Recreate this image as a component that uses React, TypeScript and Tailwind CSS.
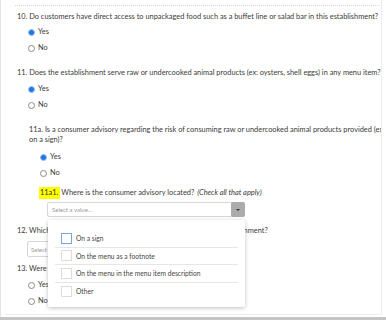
import React from "react";

function Radio({ checked, label }: { checked?: boolean; label: string }) {
  return (
    <div className="flex items-center h-[16px]">
      {checked ? (
        <span className="w-[7px] h-[7px] rounded-full bg-[#1e78e6] border border-[#9cc3f2]" />
      ) : (
        <span className="w-[7px] h-[7px] rounded-full bg-white border border-[#8a8a8a]" />
      )}
      <span className="ml-[3px]">{label}</span>
    </div>
  );
}

function Check({ label, first, last }: { label: string; first?: boolean; last?: boolean }) {
  return (
    <div className={`flex items-center h-[17.5px] mx-[7px] ${last ? "" : "border-b border-[#e6e6e6]"}`}>
      <span
        className={`ml-[6px] w-[11px] h-[11px] border ${first ? "border-[#7aa7d8]" : "border-[#dcdcdc]"} bg-white`}
      />
      <span className="ml-[4px] text-[#444]">{label}</span>
    </div>
  );
}

export default function App() {
  return (
    <div
      className="w-[386px] h-[320px] overflow-hidden bg-white flex flex-col text-[7.4px] text-[#3a3a3a] relative"
      style={{ fontFamily: 'Lato, "Liberation Sans", Arial, sans-serif' }}
    >
      <div className="h-[317px] border-l border-[#e4e4e4] pl-[4px] flex flex-col">
        <div className="w-[377px] h-[315px] border-r border-b border-[#ececec] overflow-hidden pt-[5px]">
          <div className="ml-[10px] mr-[1px] border-t border-dotted border-[#d8d8d8]" />
          <div className="pl-[12px]">
            <div className="h-[12px] mt-[5px] flex items-center whitespace-nowrap">
              10. Do customers have direct access to unpackaged food such as a buffet line or salad bar in this establishment?
            </div>
            <div className="pl-[11px] mt-[1px]">
              <Radio checked label="Yes" />
              <Radio label="No" />
            </div>
            <div className="h-[12px] mt-[11px] flex items-center whitespace-nowrap">
              11. Does the establishment serve raw or undercooked animal products (ex: oysters, shell eggs) in any menu item?
            </div>
            <div className="pl-[11px] mt-[2px]">
              <Radio checked label="Yes" />
              <Radio label="No" />
            </div>
            <div className="pl-[12px] mt-[12px]">
              <div className="leading-[10px] whitespace-nowrap">
                11a. Is a consumer advisory regarding the risk of consuming raw or undercooked animal products provided (ex: on the menu or
                <br />
                on a sign)?
              </div>
              <div className="pl-[11px] mt-[4px]">
                <Radio checked label="Yes" />
                <Radio label="No" />
              </div>
              <div className="pl-[10px]">
                <div className="h-[12px] mt-[6px] flex items-center whitespace-nowrap">
                  <span className="bg-[#ffff00] text-[#333] pl-[1px] pr-[2px]">11a1.</span>
                  <span className="ml-[1px]">Where is the consumer advisory located?</span>
                  <span className="italic ml-[3px]">(Check all that apply)</span>
                </div>
                <div className="ml-[8px] mt-[3px] w-[198px] h-[15px] border border-[#d6d6d6] rounded-[2px] flex items-center justify-between">
                  <span className="ml-[4px] text-[6px] text-[#9a9a9a]">Select a value...</span>
                  <span className="w-[14px] h-[15px] -mr-[1px] bg-[#ababab] rounded-[2px] flex items-center justify-center">
                    <span className="w-0 h-0 border-l-[2px] border-r-[2px] border-t-[2px] border-l-transparent border-r-transparent border-t-[#333]" />
                  </span>
                </div>
              </div>
            </div>
            <div className="h-[12px] mt-[8px] flex items-center whitespace-nowrap">
              12. Which type of consumer advisory disclosure is used in this establishment?
            </div>
            <div className="ml-[10px] mt-[4px] w-[218px] h-[16px] border border-[#d6d6d6] rounded-[2px] flex items-center">
              <span className="ml-[3px] text-[6px] text-[#9a9a9a]">Select a value...</span>
            </div>
            <div className="h-[12px] mt-[6px] flex items-center whitespace-nowrap">
              13. Were the consumer advisory and disclosure found compliant?
            </div>
            <div className="pl-[11px] mt-[2px]">
              <Radio label="Yes" />
              <Radio label="No" />
            </div>
          </div>
        </div>
      </div>
      <div className="h-[3px] bg-[#c4c4c4]" />

      <div className="absolute left-[48px] top-[220px] w-[197px] h-[87px] bg-white rounded-[2px] shadow-[0_1px_4px_rgba(0,0,0,0.25)] pt-[10px] text-[6.7px]">
        <Check first label="On a sign" />
        <Check label="On the menu as a footnote" />
        <Check label="On the menu in the menu item description" />
        <Check last label="Other" />
      </div>
    </div>
  );
}
